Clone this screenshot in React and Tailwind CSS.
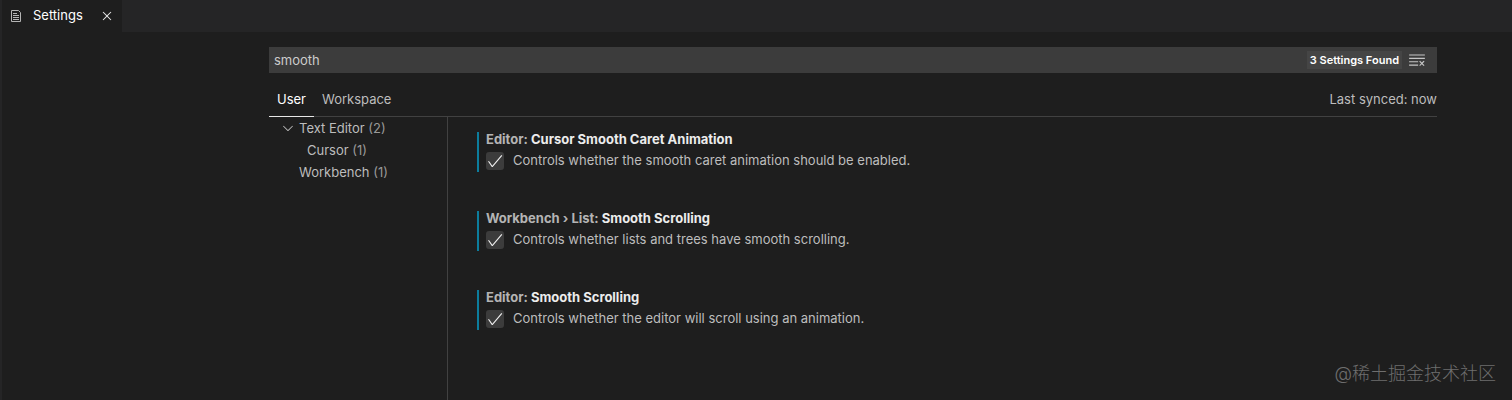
import React, { useState } from 'react';
import { VscCheck, VscChevronDown, VscClearAll, VscClose } from 'react-icons/vsc';

const SETTINGS = [
  {
    id: 'caret',
    category: 'Editor:',
    label: 'Cursor Smooth Caret Animation',
    description: 'Controls whether the smooth caret animation should be enabled.',
  },
  {
    id: 'list',
    category: 'Workbench › List:',
    label: 'Smooth Scrolling',
    description: 'Controls whether lists and trees have smooth scrolling.',
  },
  {
    id: 'editor',
    category: 'Editor:',
    label: 'Smooth Scrolling',
    description: 'Controls whether the editor will scroll using an animation.',
  },
];

function FileIcon() {
  return (
    <svg width="12" height="12" viewBox="0 0 12 12" fill="none" stroke="#b4b4b4" aria-hidden="true">
      <path d="M1.5.5h7l2 2v9h-9z" />
      <path d="M3 3.5h4M3 5.5h6M3 7.5h6M3 9.5h6" />
    </svg>
  );
}

function SettingItem({ setting }) {
  const [checked, setChecked] = useState(true);

  return (
    <div className="h-10 border-l-2 border-[#0c7d9d] pl-[7px]">
      <h3 className="h-5 leading-[14px] font-bold text-[#b4b4b4]">
        {setting.category} <span className="text-[#ececec]">{setting.label}</span>
      </h3>
      <div className="flex items-start">
        <span className="relative flex size-[18px]">
          <input
            id={setting.id}
            type="checkbox"
            checked={checked}
            onChange={(e) => setChecked(e.target.checked)}
            className="size-[18px] appearance-none rounded-[3px] bg-[#3c3c3c]"
          />
          {checked && <VscCheck size={18} className="pointer-events-none absolute inset-0 text-[#f0f0f0]" />}
        </span>
        <label htmlFor={setting.id} className="pl-[9px] leading-4 text-[#bdbdbd]">
          {setting.description}
        </label>
      </div>
    </div>
  );
}

export default function App() {
  const [query, setQuery] = useState('smooth');

  return (
    <div className="flex min-h-screen flex-col border-l-2 border-[#252526] bg-[#1e1e1e] font-['Inter','Noto_Sans_CJK_SC',sans-serif] text-[13px] text-[#bdbdbd]">
      {/* Editor tabs */}
      <header className="flex h-8 bg-[#252526]">
        <div className="flex h-8 w-[120px] items-center bg-[#1e1e1e] pl-2">
          <FileIcon />
          <span className="w-[69px] pb-0.5 pl-[11px] leading-4 text-white">Settings</span>
          <button type="button" aria-label="Close" className="pl-2 text-[#e8e8e8]">
            <VscClose size={16} />
          </button>
        </div>
      </header>

      <main className="mr-[75px] ml-[267px] flex grow flex-col pt-[15px]">
        {/* Search */}
        <div className="flex h-[26px] items-center bg-[#3c3c3c] pr-[11px]">
          <input
            type="text"
            aria-label="Search settings"
            value={query}
            onChange={(e) => setQuery(e.target.value)}
            className="min-w-0 grow px-[5px] leading-5 text-[#cccccc] outline-none"
          />
          <span className="bg-[#454545] px-[3px] text-[11px] leading-[18px] font-semibold text-white">3 Settings Found</span>
          <button type="button" aria-label="Clear search" className="pl-1.5 text-[#c5c5c5]">
            <VscClearAll size={18} />
          </button>
        </div>

        {/* Scope */}
        <div className="mt-[11px] flex h-[33px] border-b border-[#414141]">
          <button type="button" className="-mb-px border-b border-[#e7e7e7] px-2 text-white">User</button>
          <button type="button" className="px-2">Workspace</button>
          <span className="ml-auto self-center">Last synced: now</span>
        </div>

        <div className="flex grow">
          <nav className="w-[179px] shrink-0 border-r border-[#414141] leading-[22px]">
            <div className="flex items-center pl-[11px]">
              <VscChevronDown size={16} className="mr-[3px]" />
              <span>Text Editor <span className="text-[#999999]">(2)</span></span>
            </div>
            <div className="pl-[38px]">Cursor <span className="text-[#999999]">(1)</span></div>
            <div className="pl-[30px]">Workbench <span className="text-[#999999]">(1)</span></div>
          </nav>

          <section className="flex grow flex-col gap-[39px] pt-[15px] pl-[29px]">
            {SETTINGS.map((setting) => (
              <SettingItem key={setting.id} setting={setting} />
            ))}
          </section>
        </div>
      </main>

      <div className="absolute right-4 bottom-3 text-lg font-light text-[#6e6e6e]">@稀土掘金技术社区</div>
    </div>
  );
}
